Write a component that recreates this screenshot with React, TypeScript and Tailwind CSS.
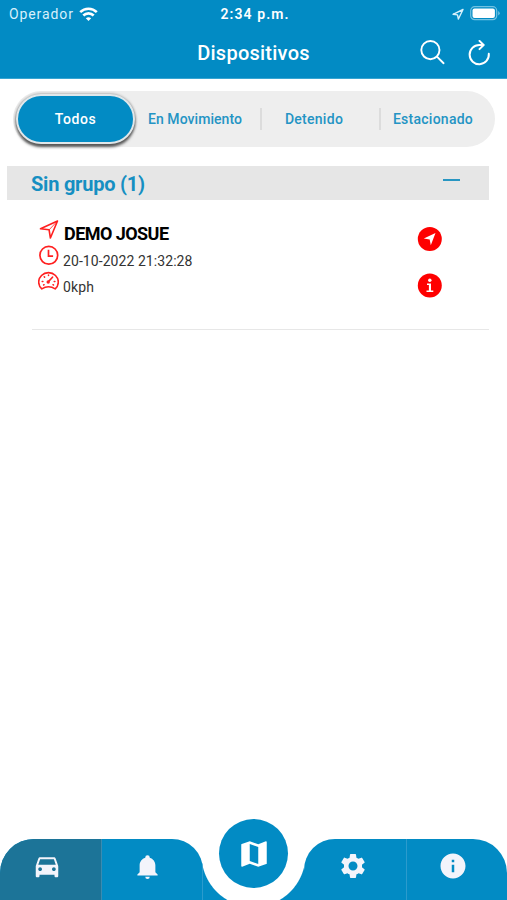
import { MdDirectionsCar, MdInfo, MdMap, MdSettings } from "react-icons/md";

const FILTERS = ["En Movimiento", "Detenido", "Estacionado"];

export default function App() {
  return (
    <div className="flex h-[900px] w-[507px] flex-col overflow-hidden bg-white font-['Roboto',sans-serif]">
      <Header />
      <main className="flex-1">
        <FilterTabs />
        <GroupHeader />
        <DeviceRow />
      </main>
      <BottomNav />
    </div>
  );
}

function Header() {
  return (
    <header className="h-[79px] border-b border-[#37a5d2] bg-[#028bc4] text-white">
      <div className="grid h-[27px] grid-cols-3 items-center pr-[6px] pl-[9px]">
        <div className="flex items-center gap-[5px] pt-px text-[14px] tracking-[0.9px] text-[#d7f0fb]">
          Operador
          <WifiIcon />
        </div>
        <div className="pt-px text-center text-[14px] font-semibold tracking-[1.1px]">2:34 p.m.</div>
        <div className="flex items-center justify-end gap-[6px]">
          <svg width="12" height="12" viewBox="0 0 12 12" fill="none" stroke="#d7f0fb" strokeWidth="1.4" strokeLinejoin="round">
            <path d="M11 1.5 1 6.3l4.5.6.9 4.1Z" />
          </svg>
          <svg width="31" height="15" viewBox="0 0 31 15">
            <rect x="0.7" y="0.7" width="26" height="13" rx="4" fill="none" stroke="#72c2e2" strokeWidth="1.2" />
            <rect x="2.5" y="2.5" width="22.4" height="9.4" rx="2" fill="white" />
            <path d="M28.2 5v4.5q1.5-.7 1.5-2.2T28.2 5" fill="#72c2e2" />
          </svg>
        </div>
      </div>
      <div className="grid h-[52px] grid-cols-[1fr_auto_1fr] items-center px-[16px]">
        <span />
        <h1 className="text-[20px] font-medium tracking-[0.25px]">Dispositivos</h1>
        <div className="flex items-center justify-end gap-[22px]">
          <svg width="26" height="26" viewBox="0 0 26 26" fill="none" stroke="white" strokeWidth="1.9" strokeLinecap="round">
            <circle cx="10.4" cy="10.1" r="9.1" />
            <path d="m17.2 16.9 6.4 6.3" />
          </svg>
          <svg width="23" height="26" viewBox="0 0 23 26" fill="none" stroke="white" strokeWidth="2" strokeLinecap="round" strokeLinejoin="round">
            <path d="M20.8 13.8A9.6 9.6 0 1 1 11.3 5h4" />
            <path d="m11.5 .9 4.1 4.1-4.1 4.1" />
          </svg>
        </div>
      </div>
    </header>
  );
}

function WifiIcon() {
  return (
    <svg width="19" height="15" viewBox="0 0 19 15" fill="none" stroke="white" strokeWidth="2.6">
      <path d="M1.2 5.2a11.8 11.8 0 0 1 16.6 0" />
      <path d="M4.3 8.5a7.4 7.4 0 0 1 10.4 0" />
      <path d="m6.8 11.2 2.7 2.9 2.7-2.9q-2.7-2.1-5.4 0Z" fill="white" stroke="none" />
    </svg>
  );
}

function FilterTabs() {
  return (
    <div className="mt-[12px] mr-[12px] ml-[13px] flex h-[56px] items-center rounded-full bg-[#eeeeee] pl-[3px] text-[14px] font-medium text-[#2494c4]">
      <button
        type="button"
        className="h-[50px] w-[119px] shrink-0 rounded-full border-2 border-[#e0e7ea] bg-[#028bc4] tracking-[0.55px] text-white shadow-[0_3px_3px_#555,0_0_3px_#888]"
      >
        Todos
      </button>
      {FILTERS.map((label, i) => (
        <button
          key={label}
          type="button"
          className={`h-[22px] shrink-0 whitespace-nowrap ${
            i === 0
              ? "w-[125px] pr-[6px] pl-[1px] tracking-[0.05px]"
              : i === 1
                ? "w-[119px] border-l-2 border-[#dcdcdc] pr-[13px] tracking-[0.28px]"
                : "w-[116px] border-l-2 border-[#dcdcdc] pr-[10px] tracking-[0.25px]"
          }`}
        >
          {label}
        </button>
      ))}
    </div>
  );
}

function GroupHeader() {
  return (
    <div className="mt-[19px] mr-[18px] ml-[7px] flex h-[34px] items-center justify-between bg-[#e6e6e6] pr-[29px] pl-[24px]">
      <h2 className="pt-[2px] text-[20px] font-bold tracking-[-0.22px] text-[#168fc2]">Sin grupo (1)</h2>
      <span className="mb-[6px] h-[2px] w-[17px] bg-[#2896c2]" />
    </div>
  );
}

function DeviceRow() {
  return (
    <section className="mr-[18px] ml-[32px] flex h-[130px] justify-between border-b border-[#e7e7e7] pt-[19px] pr-[47px] pl-[6px]">
      <div className="text-[14px] text-[#333]">
        <div className="flex h-[26px] items-start gap-[5px]">
          <svg width="21" height="21" viewBox="0 0 21 21" fill="none" stroke="#ff2020" strokeWidth="1.6" strokeLinejoin="round">
            <path d="M19.5 2 2.5 9.8l8.6 1L12.4 19Z" />
            <path d="M19.5 2 11.1 10.8" strokeWidth=".8" />
          </svg>
          <span className="pt-[2px] text-[18px] leading-[25px] font-bold tracking-[-0.55px] text-black">DEMO JOSUE</span>
        </div>
        <div className="flex h-[26px] items-start gap-[4px]">
          <svg width="21" height="21" viewBox="0 0 21 21" fill="none" stroke="#ff2020" strokeWidth="1.7">
            <circle cx="10.8" cy="10.3" r="8.9" />
            <path d="M10.5 4.8v6.4h4.6" />
          </svg>
          <span className="pt-[6px] leading-[21px] tracking-[0.07px]">20-10-2022 21:32:28</span>
        </div>
        <div className="flex h-[26px] items-start gap-[4px]">
          <GaugeIcon />
          <span className="pt-[6px] leading-[21px] tracking-[0.15px]">0kph</span>
        </div>
      </div>
      <div className="flex flex-col gap-[22px] pt-[7px]">
        <svg width="25" height="25" viewBox="0 0 25 25">
          <circle cx="12.8" cy="12.9" r="12" fill="#fe0000" />
          <path d="M18.5 7 6.8 12.4l5.9 1.1 1.1 5.8Z" fill="white" />
        </svg>
        <svg width="25" height="25" viewBox="0 0 25 25">
          <circle cx="12.8" cy="12.5" r="12" fill="#fe0000" />
          <circle cx="12.8" cy="7.2" r="1.7" fill="white" />
          <path d="M10 10.5h4v6.9h2.3v1.5H9.5v-1.5h2.4v-5.3H10Z" fill="white" />
        </svg>
      </div>
    </section>
  );
}

function GaugeIcon() {
  return (
    <svg width="21" height="20" viewBox="0 0 21 20" fill="none" stroke="#ff2020" strokeWidth="1.6" strokeLinecap="round" strokeLinejoin="round">
      <path d="M3.8 17.9A9.8 9.4 0 1 1 17.2 17.9Q10.5 13.6 3.8 17.9Z" />
      <path d="M10.5 4v.6M6.2 5.7l.4.4M4.2 10.4h.7M16.2 10.4h.7M5.6 14l.5-.3M15 13.7l.5.3" strokeWidth="1.5" />
      <path d="m10.3 10.8 4.2-4.6" strokeWidth="1.7" />
      <circle cx="10.2" cy="11" r="1.7" fill="#ff2020" stroke="none" />
    </svg>
  );
}

function BellIcon() {
  return (
    <svg width="27" height="27" viewBox="0 0 24 24" fill="currentColor">
      <path d="M21 19v1H3v-1l2-2v-6c0-3.1 2.03-5.83 5-6.71V4a2 2 0 0 1 4 0v.29c2.97.88 5 3.61 5 6.71v6l2 2M14 21a2 2 0 0 1-4 0" />
    </svg>
  );
}

function BottomNav() {
  return (
    <nav className="flex h-[61px] items-stretch text-[#f3f4fb]">
      <div className="flex w-[203px] overflow-hidden rounded-tl-[34px] rounded-tr-[31px] bg-[#028bc4]">
        <button type="button" className="flex w-[102px] items-center justify-center border-r border-[#3b8bb0] bg-[#1c7498] pr-[7px] pb-[7px]">
          <MdDirectionsCar size={30} />
        </button>
        <button type="button" className="flex flex-1 items-center justify-center border-r border-[#2b9bcd] pr-[9px] pb-[7px]">
          <BellIcon />
        </button>
      </div>
      {/* curved dip that holds the raised map button */}
      <div className="relative flex w-[101px] items-end">
        <div className="h-[38px] w-full bg-[radial-gradient(circle_at_50%_-7px,white_51.5px,#028bc4_52.5px)]" />
        <button
          type="button"
          className="absolute -top-[20px] left-[16px] flex size-[69px] items-center justify-center rounded-full bg-[#028bc4] text-white"
        >
          <MdMap size={34} />
        </button>
      </div>
      <div className="flex w-[203px] overflow-hidden rounded-tl-[31px] rounded-tr-[34px] bg-[#028bc4]">
        <button type="button" className="flex w-[103px] items-center justify-center border-r border-[#2b9bcd] pr-[5px] pb-[7px]">
          <MdSettings size={30} />
        </button>
        <button type="button" className="flex flex-1 items-center justify-center pr-[8px] pb-[7px]">
          <MdInfo size={30} />
        </button>
      </div>
    </nav>
  );
}
